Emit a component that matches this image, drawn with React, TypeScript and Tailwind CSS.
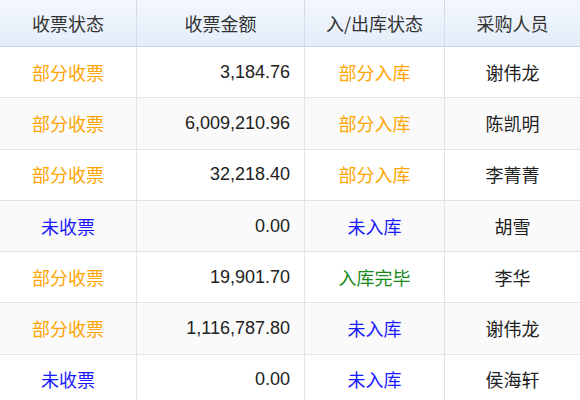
const rows: [string, string, string, string, string][] = [
  ["部分收票", "3,184.76", "部分入库", "谢伟龙", "o"],
  ["部分收票", "6,009,210.96", "部分入库", "陈凯明", "o"],
  ["部分收票", "32,218.40", "部分入库", "李菁菁", "o"],
  ["未收票", "0.00", "未入库", "胡雪", "b"],
  ["部分收票", "19,901.70", "入库完毕", "李华", "g"],
  ["部分收票", "1,116,787.80", "未入库", "谢伟龙", "b"],
  ["未收票", "0.00", "未入库", "侯海轩", "b"],
];
const col = (s: string) =>
  s.startsWith("部分") ? "text-[#ffa500]" : s.startsWith("未") ? "text-[#1a1aff]" : "text-[#1a8a1a]";
export default function App() {
  return (
    <div className="w-[580px] h-[400px] overflow-hidden bg-white text-[18px] text-[#222]" style={{ fontFamily: '"Microsoft YaHei","Noto Sans CJK SC",sans-serif' }}>
      <div className="grid grid-cols-[137px_168px_140px_135px] h-[47px] bg-gradient-to-b from-[#f3f7fd] to-[#e4edf9] border-b border-[#c9d6e6] text-[#333]">
        {["收票状态", "收票金额", "入/出库状态", "采购人员"].map((h, i) => (
          <div key={i} className={`flex items-center justify-center ${i < 3 ? "border-r border-[#d2dcea]" : ""}`}>{h}</div>
        ))}
      </div>
      {rows.map((r, i) => (
        <div key={i} className={`grid grid-cols-[137px_168px_140px_135px] h-[51.3px] border-b border-[#e3e3e3] ${i % 2 ? "bg-[#fafafa]" : "bg-white"}`}>
          <div className={`flex items-center justify-center border-r border-[#e3e3e3] ${col(r[0])}`}>{r[0]}</div>
          <div className="flex items-center justify-end pr-[14px] border-r border-[#e3e3e3]" style={{ fontFamily: '"Liberation Sans",Arial,sans-serif' }}>{r[1]}</div>
          <div className={`flex items-center justify-center border-r border-[#e3e3e3] ${col(r[2])}`}>{r[2]}</div>
          <div className="flex items-center justify-center">{r[3]}</div>
        </div>
      ))}
    </div>
  );
}
